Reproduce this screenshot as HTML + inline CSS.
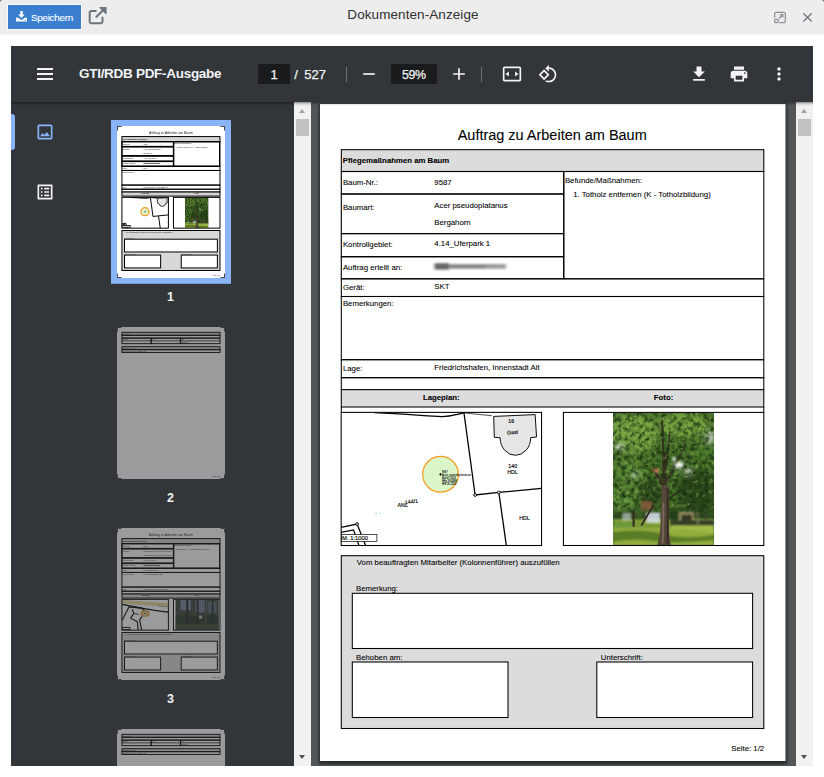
<!DOCTYPE html>
<html lang="de">
<head>
<meta charset="utf-8">
<title>Dokumenten-Anzeige</title>
<style>
html,body{margin:0;padding:0;}
body{width:824px;height:777px;overflow:hidden;background:#fff;position:relative;font-family:"Liberation Sans",sans-serif;}
.abs{position:absolute;}
#cor{left:0;top:0;width:824px;height:4px;background:#6a6a6a;}
#hdr{left:0;top:0;width:824px;height:34px;background:#ededed;border-bottom:1px solid #f3f5f7;border-radius:3px 3px 0 0;}
#save{left:8px;top:5px;width:73px;height:24px;box-shadow:0 0 0 1px rgba(255,252,246,.75);background:#3a7fcf;color:#fff;font-size:9.900px;letter-spacing:-0.27px;-webkit-text-stroke:.1px #fff;}
#save span{position:absolute;left:22.900px;top:7.300px;line-height:12px;white-space:nowrap;}
#ttl{left:347.300px;top:6px;white-space:nowrap;font-size:13.500px;line-height:17px;color:#303030;letter-spacing:0.08px;}
#tb{left:11px;top:46px;width:802px;height:56px;background:#323639;color:#f1f3f4;}
#tb .t{position:absolute;white-space:nowrap;line-height:20px;top:18px;font-size:13.5px;}
#tb .n{font-size:13px;letter-spacing:0;top:18.700px;-webkit-text-stroke:.25px #f1f3f4;}
#tbsh{left:11px;top:102px;width:802px;height:4px;background:linear-gradient(rgba(0,0,0,.42),rgba(0,0,0,.12) 50%,rgba(0,0,0,0));pointer-events:none;}
#side{left:11px;top:102px;width:283px;height:664px;background:#323639;overflow:hidden;}
.sb{width:17px;top:102px;height:664px;background:#f1f1f1;}
.sb i{position:absolute;left:2px;width:13px;top:17px;height:17px;background:#c1c1c1;}
.sb b{position:absolute;left:4.900px;width:0;height:0;border-left:3.700px solid transparent;border-right:3.700px solid transparent;}
.sb b.u{top:6.500px;border-bottom:4.500px solid #a0a0a0;}
.sb b.d{bottom:7px;border-top:4.300px solid #505050;}
#view{left:311px;top:102px;width:485px;height:664px;background:#525659;overflow:hidden;}
.lbl{position:absolute;left:99.5px;width:120px;text-align:center;color:#f1f3f4;font-size:12.5px;font-weight:bold;line-height:14px;}
svg{display:block;}
.pt text{stroke:#000;stroke-width:.08px;}
svg text{font-family:"Liberation Sans",sans-serif;}
</style>
</head>
<body>
<div id="cor" class="abs"></div>
<div id="hdr" class="abs"></div>
<div id="save" class="abs">
<svg class="abs" style="left:8px;top:6px" width="11" height="11" viewBox="0 0 11 11"><path d="M4.3 0h2.4v3.6h2.1L5.5 7 2.2 3.6h2.1z" fill="#fff"/><path d="M0 6.8h2.6l1.9 1.9h2l1.9-1.9H11v3.6H0z" fill="#fff"/><rect x="8.6" y="8.5" width="1" height="1" fill="#3a7fcf"/></svg>
<span>Speichern</span></div>
<svg class="abs" style="left:88px;top:6px" width="20" height="19" viewBox="0 0 20 19"><path d="M14.5 11.5v4.2a1.6 1.6 0 0 1-1.6 1.6H3.3a1.6 1.6 0 0 1-1.6-1.6V6.6A1.6 1.6 0 0 1 3.300 5h4.5" fill="none" stroke="#6c757d" stroke-width="2" stroke-linecap="round"/><path d="M8.5 10.800L17 2.300" fill="none" stroke="#6c757d" stroke-width="2.200" stroke-linecap="round"/><path d="M12 1.500h6v6z" fill="#6c757d" stroke="#6c757d" stroke-width="1.200" stroke-linejoin="round"/></svg>
<div id="ttl" class="abs">Dokumenten-Anzeige</div>
<svg class="abs" style="left:773px;top:11px" width="14" height="13" viewBox="0 0 14 13"><path d="M5.200 1.300H10.800a1.500 1.500 0 0 1 1.500 1.500V10.200a1.500 1.500 0 0 1 -1.500 1.500H6.200M1.700 6.800V2.800a1.500 1.500 0 0 1 1.500-1.500h2" fill="none" stroke="#8b9097" stroke-width="1.200"/><rect x="1.700" y="8.300" width="3.400" height="3.400" rx=".8" fill="none" stroke="#8b9097" stroke-width="1.200"/><path d="M6 7.500L9.800 3.700M6.800 3.700h3v3" fill="none" stroke="#8b9097" stroke-width="1.200"/></svg>
<svg class="abs" style="left:802px;top:12px" width="11" height="11" viewBox="0 0 11 11"><path d="M1.300 1.300l8.500 8.200M9.800 1.300L1.300 9.500" stroke="#6f7782" stroke-width="1.250" fill="none"/></svg>
<div id="tb" class="abs">
<svg class="abs" style="left:22px;top:16px" width="24" height="24" viewBox="0 0 24 24"><path fill="#f1f3f4" d="M4 6h16v2H4zM4 11h16v2H4zM4 16h16v2H4z"/></svg>
<div class="t" style="left:68px;font-weight:bold;letter-spacing:-0.29px;">GTI/RDB PDF-Ausgabe</div>
<div class="abs" style="left:247px;top:18px;width:32px;height:20px;background:#191b1c;"></div>
<div class="t n" style="left:247px;width:32px;text-align:center;">1</div>
<div class="t n" style="left:283.300px;word-spacing:2.800px;">/ 527</div>
<div class="abs" style="left:335px;top:21px;width:1px;height:15px;background:rgba(255,255,255,.3);"></div>
<svg class="abs" style="left:348px;top:18px" width="20" height="20" viewBox="0 0 24 24"><path fill="#f1f3f4" d="M19 13H5v-2h14v2z"/></svg>
<div class="abs" style="left:380px;top:18px;width:46px;height:20px;background:#191b1c;"></div>
<div class="t n" style="left:380px;width:46px;text-align:center;font-size:12.400px;letter-spacing:-.3px;text-indent:-.3px;">59%</div>
<svg class="abs" style="left:438px;top:18px" width="20" height="20" viewBox="0 0 24 24"><path fill="#f1f3f4" d="M19 13h-6v6h-2v-6H5v-2h6V5h2v6h6v2z"/></svg>
<div class="abs" style="left:470px;top:21px;width:1px;height:15px;background:rgba(255,255,255,.3);"></div>
<svg class="abs" style="left:491px;top:18px" width="20" height="20" viewBox="0 0 24 24"><path fill="#f1f3f4" fill-rule="evenodd" d="M21 3H3c-1.100 0-2 .9-2 2v14c0 1.100.9 2 2 2h18c1.100 0 2-.9 2-2V5c0-1.100-.9-2-2-2zm0 16H3V5h18v14zM4.200 12l4.100-3.100v6.200zM19.800 12l-4.100-3.100v6.200z"/></svg>
<svg class="abs" style="left:527px;top:18px" width="20" height="20" viewBox="0 0 24 24"><path fill="#f1f3f4" d="M7.340 6.410L.860 12.900l6.490 6.480 6.490-6.480-6.500-6.490zM3.690 12.900l3.660-3.660L11 12.900l-3.660 3.660-3.650-3.660zm15.670-6.260C17.610 4.880 15.300 4 13 4V.76L8.760 5 13 9.240V6c1.790 0 3.580.68 4.950 2.050 2.730 2.730 2.730 7.170 0 9.900C16.580 19.320 14.790 20 13 20c-.97 0-1.940-.21-2.840-.61l-1.490 1.490C10.020 21.620 11.510 22 13 22c2.300 0 4.610-.88 6.360-2.640 3.520-3.510 3.520-9.210 0-12.720z"/></svg>
<svg class="abs" style="left:678px;top:18px" width="20" height="20" viewBox="0 0 24 24"><path fill="#f1f3f4" d="M19 9h-4V3H9v6H5l7 7 7-7zM5 18v2h14v-2H5z"/></svg>
<svg class="abs" style="left:718px;top:18px" width="20" height="20" viewBox="0 0 24 24"><path fill="#f1f3f4" d="M19 8H5c-1.660 0-3 1.340-3 3v6h4v4h12v-4h4v-6c0-1.660-1.340-3-3-3zm-3 11H8v-5h8v5zm3-7c-.55 0-1-.45-1-1s.45-1 1-1 1 .45 1 1-.45 1-1 1zm-1-9H6v4h12V3z"/></svg>
<svg class="abs" style="left:758px;top:18px" width="20" height="20" viewBox="0 0 24 24"><path fill="#f1f3f4" d="M12 8c1.100 0 2-.9 2-2s-.9-2-2-2-2 .9-2 2 .9 2 2 2zm0 2c-1.100 0-2 .9-2 2s.9 2 2 2 2-.9 2-2-.9-2-2-2zm0 6c-1.100 0-2 .9-2 2s.9 2 2 2 2-.9 2-2-.9-2-2-2z"/></svg>
</div>
<div id="side" class="abs">
<div class="abs" style="left:0;top:12px;width:4px;height:36px;background:#8ab4f8;border-radius:0 3px 3px 0;"></div>
<svg class="abs" style="left:24px;top:20px" width="20" height="20" viewBox="0 0 24 24"><path fill="#8ab4f8" d="M19 5v14H5V5h14m0-2H5c-1.100 0-2 .9-2 2v14c0 1.100.9 2 2 2h14c1.100 0 2-.9 2-2V5c0-1.100-.9-2-2-2zm-4.860 8.860l-3 3.870L9 13.140 6 17h12l-3.860-5.140z"/></svg>
<svg class="abs" style="left:24px;top:80px" width="20" height="20" viewBox="0 0 24 24"><path fill="#f1f3f4" d="M11 7h6v2h-6zm0 4h6v2h-6zm0 4h6v2h-6zM7 7h2v2H7zm0 4h2v2H7zm0 4h2v2H7zM20.100 3H3.900c-.5 0-.9.400-.9.900v16.200c0 .400.400.900.900.900h16.200c.400 0 .900-.500.900-.900V3.900c0-.500-.500-.900-.900-.900zM19 19H5V5h14v14z"/></svg>
<svg class="abs" style="left:0;top:0" width="283" height="664" viewBox="11 102 283 664">
<defs><clipPath id="ph3c"><rect x="9" y="2" width="186" height="129"/></clipPath></defs>
<rect x="111" y="120" width="120" height="163.800" fill="#8ab4f8"/>
<g opacity=".999">
<rect x="117" y="126" width="108" height="152" fill="#fff"/>
<g transform="translate(117 126) scale(0.23201 0.23135) translate(-320 -104)">
<g fill="none" stroke="#000" stroke-width="4.31">
<rect x="341.3" y="149.7" width="422.5" height="21.5" fill="#d4d4d4"/>
<rect x="341.3" y="172.4" width="222" height="20" stroke-width="4.96"/>
<rect x="341.3" y="194.8" width="222" height="37.3" stroke-width="4.96"/>
<rect x="341.3" y="234.5" width="222" height="20.7" stroke-width="4.96"/>
<rect x="341.3" y="257.6" width="222" height="19.8" stroke-width="4.96"/>
<rect x="565" y="173" width="197" height="104"/>
<rect x="341.3" y="171.2" width="422.500" height="107.4"/>
<rect x="341.3" y="278.6" width="422.5" height="17.6"/>
<rect x="341.3" y="296.2" width="422.5" height="63.1"/>
<rect x="341.3" y="359.3" width="422.5" height="18"/>
<rect x="341.3" y="377.3" width="422.5" height="12.1"/>
<rect x="341.3" y="389.4" width="422.5" height="17.6" fill="#d4d4d4"/>
<rect x="341.3" y="555.7" width="422.5" height="172.8" fill="#d8d8d8"/>
<rect x="352.3" y="593.3" width="400.3" height="55.2" fill="#fff"/>
<rect x="352.3" y="662" width="155.7" height="55.5" fill="#fff"/>
<rect x="596.8" y="662" width="155.8" height="55.5" fill="#fff"/>
</g>
<g fill="#222" font-size="7.8">
<text x="552.2" y="140.2" font-size="14.5" text-anchor="middle">Auftrag zu Arbeiten am Baum</text>
<rect x="434" y="264" width="72" height="4.5" fill="#777"/>
<text x="342.7" y="162.6" font-weight="bold">Pflegemaßnahmen am Baum</text>
<text x="342.9" y="185.1">Baum-Nr.:</text>
<text x="434.3" y="185">9587</text>
<text x="342.9" y="209.7">Baumart:</text>
<text x="434.3" y="208.1">Acer pseudoplatanus</text>
<text x="434.3" y="225">Bergahorn</text>
<text x="342.9" y="246.9">Kontrollgebiet:</text>
<text x="434.3" y="246.1">4.14_Uferpark 1</text>
<text x="342.9" y="269.7">Auftrag erteilt an:</text>
<text x="342.9" y="289.9">Gerät:</text>
<text x="434.3" y="289">SKT</text>
<text x="342.9" y="305.7">Bemerkungen:</text>
<text x="342.9" y="371">Lage:</text>
<text x="434.3" y="370">Friedrichshafen, Innenstadt Alt</text>
<text x="565.2" y="183">Befunde/Maßnahmen:</text>
<text x="573.5" y="197.1">1. Totholz entfernen (K - Totholzbildung)</text>
<text x="424" y="399.9" font-weight="bold">Lageplan:</text>
<text x="654" y="399.9" font-weight="bold">Foto:</text>
<text x="356.8" y="565.2">Vom beauftragten Mitarbeiter (Kolonnenführer) auszufüllen</text>
<text x="356" y="590.8">Bemerkung:</text>
<text x="356" y="660">Behoben am:</text>
<text x="600.8" y="660">Unterschrift:</text>
<text x="731.5" y="751">Seite: 1/2</text>
</g><g transform="translate(330 380) scale(0.2791)">
<rect x="40" y="116" width="718" height="477" fill="#fff"/>
<g fill="none" stroke="#000" stroke-width="15" clip-path="url(#mapclip)">
<path d="M160 117C250 121 330 127 400 131C430 131 455 123 480 118L580 126"/>
<path d="M480 118L520 412L605 403L757 388M605 403L632 594"/>
<path d="M585 130L735 122L740 202L718 206A55 58 0 0 1 610 212L590 206Z" fill="#e4e4e4" stroke-width="12"/>
<circle cx="396" cy="338" r="62" fill="#dbf6c9" stroke="#f59a1c" stroke-width="20"/>
<path d="M30 530L97 516L128 594M30 548L84 537L104 594"/>
<rect x="40" y="553" width="128" height="25" fill="#fff" stroke-width="12"/>
<path d="M380 338h34" stroke-width="10" stroke="#333"/>
</g>
<rect x="40" y="116" width="718" height="477" fill="none" stroke="#000" stroke-width="15.5"/>
</g><g transform="translate(613.1 413)">
<g clip-path="url(#phc)">
<rect x="0" y="0" width="101" height="132.300" fill="#3c5e22"/>
<rect x="0" y="92" width="101" height="20" fill="#2c4420"/>
<g filter="url(#b2)">
<rect x="0" y="106" width="101" height="27" fill="#90ad3c"/>
<path d="M0 107h34l10 4h57v4H0z" fill="#7a9a34"/>
<path d="M58 112h43v8Q80 116 58 116z" fill="#a2ba4a"/>
<path d="M0 119Q30 115 50 121T101 122V127Q60 131 40 128T0 129Z" fill="#5a7c26"/>
<path d="M0 110h22v4H0z" fill="#6c983a"/>
</g>
<g mask="url(#lm)">
<g filter="url(#leaf)">
<rect x="0" y="0" width="101" height="112" fill="#47702a"/>
<g filter="url(#b1)">
<ellipse cx="20" cy="20" rx="26" ry="20" fill="#78a642"/>
<ellipse cx="70" cy="12" rx="26" ry="13" fill="#76a440"/>
<ellipse cx="18" cy="58" rx="18" ry="12" fill="#5c8c34"/>
<ellipse cx="10" cy="86" rx="14" ry="13" fill="#5c8e38"/>
<ellipse cx="84" cy="80" rx="20" ry="24" fill="#2c4c1b"/>
<ellipse cx="38" cy="80" rx="11" ry="14" fill="#2e4e1e"/>
<ellipse cx="90" cy="40" rx="12" ry="16" fill="#4c7c2c"/>
<ellipse cx="66" cy="52" rx="4.500" ry="2.800" fill="#f4f6f4"/>
<ellipse cx="75" cy="58" rx="3" ry="1.600" fill="#e6ece8"/>
<ellipse cx="97" cy="24" rx="3" ry="6" fill="#d2dacc"/>
<ellipse cx="6" cy="34" rx="3.500" ry="2.500" fill="#ccd6c4"/>
<ellipse cx="22" cy="62" rx="2" ry="1.500" fill="#dde4d8"/>
</g>
<g fill="none" stroke-linecap="round" filter="url(#b3)">
<path d="M50.500 58C50.500 40 50 25 49 8" stroke="#3a3024" stroke-width="2"/><path d="M51.500 92C52 78 51.500 70 51.500 42" stroke="#3a3024" stroke-width="4.200"/>
<path d="M50.500 74C47 68 44 62 41 56" stroke="#3e3226" stroke-width="2.800"/>
<path d="M53 70C58 60 66 45 72.500 31" stroke="#43382e" stroke-width="1.500"/>
<path d="M52 60C54 45 56 35 56.500 20" stroke="#3c3328" stroke-width="1.500"/>
<path d="M55 86L68 77" stroke="#2e281e" stroke-width="1.500"/>
<ellipse cx="42" cy="57" rx="3" ry="2.500" fill="#a8704c" stroke="none"/>
</g>
</g>
</g>
<g filter="url(#b2)">
<ellipse cx="66" cy="52" rx="4" ry="2.500" fill="#f4f6f4"/>
<ellipse cx="61" cy="46" rx="1.500" ry="2.500" fill="#e4eae6"/>
<ellipse cx="75" cy="58" rx="3" ry="1.300" fill="#dfe6e2" opacity=".8"/>
<ellipse cx="98" cy="24" rx="2" ry="5" fill="#d2dacc" opacity=".7"/>
<ellipse cx="5" cy="34" rx="3" ry="2" fill="#ccd6c4" opacity=".7"/>
<ellipse cx="21" cy="62" rx="2" ry="1.500" fill="#dde4d8" opacity=".7"/>
<ellipse cx="44" cy="58" rx="2.500" ry="2" fill="#b07850"/>
</g>
<g filter="url(#b2)" opacity=".9">
<rect x="28" y="88" width="11" height="9" fill="#9a5a40" opacity=".8"/>
<rect x="33" y="99.500" width="14" height="10.500" fill="#d4dbe6"/>
<rect x="9" y="100" width="9" height="8" fill="#b9c2c0" opacity=".8"/>
<rect x="66" y="99" width="15" height="10" fill="#a89a6c"/>
<rect x="68" y="101.500" width="11" height="7.500" fill="#34362a"/>
<rect x="57" y="107" width="44" height="5" fill="#2a3326"/>
<rect x="84" y="99" width="1.500" height="12" fill="#7a7868"/>
<rect x="92" y="101" width="1.500" height="11" fill="#3c3a2e"/>
<ellipse cx="61" cy="103" rx="5" ry="6" fill="#24401a"/>
<ellipse cx="26" cy="101" rx="4" ry="5" fill="#3a6026"/>
</g>
<g filter="url(#b3)" fill="none" stroke-linecap="round">
<path d="M20.500 99V113" stroke="#36331f" stroke-width="2.200"/>
<path d="M28.500 112L40 93" stroke="#322c20" stroke-width="1.800"/>
<path d="M44 132.500C47 124 47.500 112 48 100C48.300 92 48 84 48.500 72L55.500 72C55.800 84 56.200 92 56 100C55.800 112 55.500 124 58 132.500Z" fill="#56463a" stroke="none"/>
<path d="M49.500 130C50.300 118 50.300 104 50.300 90" stroke="#78685a" stroke-width="1.800"/>
<path d="M54.500 130C54.500 118 54.800 104 54.500 76" stroke="#362c22" stroke-width="1.800"/>
</g>
</g>
<rect x="0" y="0" width="101" height="108" fill="#1c3410" opacity=".38"/>
<rect x="-49.700" y="-.6" width="200.400" height="133.100" fill="none" stroke="#000" stroke-width="4.3"/>
</g>
</g>
<path d="M121.5 126.5H117M117.5 126V130.5M220.5 126.5H225M224.5 126V130.5M121.5 277.5H117M117.5 278V273.5M220.5 277.5H225M224.5 278V273.5" fill="none" stroke="#4a4a4a" stroke-width="1"/>
</g>
<g opacity=".5">
<rect x="117" y="327" width="108" height="152" fill="#fff"/>
<g transform="translate(117 327) scale(0.23201 0.23135) translate(-320 -104)">
<g fill="none" stroke="#000" stroke-width="4.31">
<rect x="341.3" y="127" width="422.5" height="13" fill="#d4d4d4"/>
<rect x="341.3" y="140" width="422.5" height="12"/>
<rect x="341.3" y="152" width="126" height="24"/>
<rect x="467.3" y="152" width="126" height="24"/>
<rect x="593.3" y="152" width="170.5" height="24"/>
<path d="M341.3 164H763.8" stroke-width="3.2"/>
<rect x="341.3" y="189" width="422.5" height="13" fill="#d4d4d4"/>
<rect x="341.3" y="202" width="422.5" height="12"/>
</g>
<g fill="#222" font-size="7.8">
<text x="343" y="137">Ausführung</text>
<text x="343" y="161">Datum:</text>
<text x="469" y="161">Von:</text>
<text x="595" y="161">Bis:</text>
<text x="595" y="173">Stunden:</text>
<text x="343" y="199">Material / Geräte</text>
<text x="343" y="211">Bemerkungen zur Ausführung</text>
<text x="731.5" y="751">Seite: 2/2</text>
</g>
</g>
<path d="M121.5 327.5H117M117.5 327V331.5M220.5 327.5H225M224.5 327V331.5M121.5 478.5H117M117.5 479V474.5M220.5 478.5H225M224.5 479V474.5" fill="none" stroke="#4a4a4a" stroke-width="1"/>
</g>
<g opacity=".5">
<rect x="117" y="528" width="108" height="152" fill="#fff"/>
<g transform="translate(117 528) scale(0.23201 0.23135) translate(-320 -104)">
<g fill="none" stroke="#000" stroke-width="4.31">
<rect x="341.3" y="149.7" width="422.5" height="21.5" fill="#d4d4d4"/>
<rect x="341.3" y="172.4" width="222" height="20" stroke-width="4.96"/>
<rect x="341.3" y="194.8" width="222" height="37.3" stroke-width="4.96"/>
<rect x="341.3" y="234.5" width="222" height="20.7" stroke-width="4.96"/>
<rect x="341.3" y="257.6" width="222" height="19.8" stroke-width="4.96"/>
<rect x="565" y="173" width="197" height="104"/>
<rect x="341.3" y="171.2" width="422.500" height="107.4"/>
<rect x="341.3" y="278.6" width="422.5" height="17.6"/>
<rect x="341.3" y="296.2" width="422.5" height="63.1"/>
<rect x="341.3" y="359.3" width="422.5" height="18"/>
<rect x="341.3" y="377.3" width="422.5" height="12.1"/>
<rect x="341.3" y="389.4" width="422.5" height="17.6" fill="#d4d4d4"/>
<rect x="341.3" y="555.7" width="422.5" height="172.8" fill="#d8d8d8"/>
<rect x="352.3" y="593.3" width="400.3" height="55.2" fill="#fff"/>
<rect x="352.3" y="662" width="155.7" height="55.5" fill="#fff"/>
<rect x="596.8" y="662" width="155.8" height="55.5" fill="#fff"/>
</g>
<g fill="#222" font-size="7.8">
<text x="552.2" y="140.2" font-size="14.5" text-anchor="middle">Auftrag zu Arbeiten am Baum</text>
<rect x="434" y="264" width="72" height="4.5" fill="#777"/>
<text x="342.7" y="162.6" font-weight="bold">Pflegemaßnahmen am Baum</text>
<text x="342.9" y="185.1">Baum-Nr.:</text>
<text x="434.3" y="185">10286</text>
<text x="342.9" y="209.7">Baumart:</text>
<text x="434.3" y="208.1">Baumgruppe bis 10 St. Laubbäume</text>
<text x="434.3" y="225">Baumgruppe bis 10 St. Laubbäume</text>
<text x="342.9" y="246.9">Kontrollgebiet:</text>
<text x="434.3" y="246.1">4.14_Uferpark 1</text>
<text x="342.9" y="269.7">Auftrag erteilt an:</text>
<text x="342.9" y="289.9">Gerät:</text>
<text x="434.3" y="289">Hub-Steiger, SKT</text>
<text x="342.9" y="305.7">Bemerkungen:</text>
<text x="342.9" y="371">Lage:</text>
<text x="434.3" y="370">Friedrichshafen, Innenstadt Alt</text>
<text x="565.2" y="183">Befunde/Maßnahmen:</text>
<text x="573.5" y="197.1">1. Entfernen (K - Absterbender Baum/Ast)</text>
<text x="424" y="399.9" font-weight="bold">Lageplan:</text>
<text x="654" y="399.9" font-weight="bold">Foto:</text>
<text x="356.8" y="565.2">Vom beauftragten Mitarbeiter (Kolonnenführer) auszufüllen</text>
<text x="356" y="590.8">Bemerkung:</text>
<text x="356" y="660">Behoben am:</text>
<text x="600.8" y="660">Unterschrift:</text>
<text x="731.5" y="751">Seite: 1/2</text>
<text x="434.3" y="305.7">ca. 2-3 Stk/Bäume/Jahr</text>
</g><g transform="translate(330 380) scale(0.2791)">
<rect x="40" y="116" width="718" height="477" fill="#fff"/>
<g fill="none" stroke="#000" stroke-width="17" clip-path="url(#mapclip)" stroke-linejoin="round">
<path d="M40 126L758 172L758 236L40 182Z" fill="#e6d99a" stroke="none"/>
<path d="M40 193C200 222 320 250 405 265C520 285 640 300 758 316" stroke-width="20"/>
<path d="M600 220L758 232" stroke="#9a9270" stroke-width="12"/>
<path d="M520 262L758 290" stroke="#fff" stroke-width="16"/>
<path d="M45 440L150 232L345 252L400 312M199 269L222 334L176 407L279 464L291 590M345 590L313 430L355 379"/>
<path d="M222 334L300 350" stroke-width="12"/>
<ellipse cx="398" cy="336" rx="62" ry="42" fill="#d9cf9c" stroke="#e8901a" stroke-width="18"/>
<path d="M375 336h46" stroke="#555" stroke-width="14"/>
<rect x="46" y="551" width="118" height="34" fill="#fff" stroke-width="14"/>
</g>
<rect x="40" y="116" width="718" height="477" fill="none" stroke="#000" stroke-width="15.5"/>
</g><g transform="translate(563.4 412.4)">
<rect x="0" y="0" width="200.400" height="133.100" fill="#fff"/>
<rect x="9" y="2" width="186" height="129" fill="#3a4636"/>
<g filter="url(#b1)" clip-path="url(#ph3c)">
<rect x="30" y="2" width="45" height="45" fill="#76849a"/>
<rect x="95" y="2" width="50" height="55" fill="#6c7a8c"/>
<rect x="150" y="10" width="36" height="50" fill="#5c6a74"/>
<rect x="9" y="70" width="186" height="60" fill="#2c3626"/>
<rect x="55" y="0" width="9" height="130" fill="#262822"/>
<rect x="100" y="0" width="8" height="130" fill="#2c2c28"/>
<rect x="135" y="0" width="7" height="130" fill="#4a4238"/>
<rect x="165" y="0" width="7" height="130" fill="#282a24"/>
<rect x="9" y="105" width="186" height="26" fill="#3e4c30"/>
<rect x="110" y="70" width="14" height="14" fill="#a8b0b4"/>
</g>
<rect x="0" y="0" width="200.400" height="133.100" fill="none" stroke="#000" stroke-width="4.3"/>
</g>
</g>
<path d="M121.5 528.5H117M117.5 528V532.5M220.5 528.5H225M224.5 528V532.5M121.5 679.5H117M117.5 680V675.5M220.5 679.5H225M224.5 680V675.5" fill="none" stroke="#4a4a4a" stroke-width="1"/>
</g>
<g opacity=".5">
<rect x="117" y="729" width="108" height="152" fill="#fff"/>
<g transform="translate(117 729) scale(0.23201 0.23135) translate(-320 -104)">
<g fill="none" stroke="#000" stroke-width="4.31">
<rect x="341.3" y="127" width="422.5" height="13" fill="#d4d4d4"/>
<rect x="341.3" y="140" width="422.5" height="12"/>
<rect x="341.3" y="152" width="126" height="24"/>
<rect x="467.3" y="152" width="126" height="24"/>
<rect x="593.3" y="152" width="170.5" height="24"/>
<path d="M341.3 164H763.8" stroke-width="3.2"/>
<rect x="341.3" y="189" width="422.5" height="13" fill="#d4d4d4"/>
<rect x="341.3" y="202" width="422.5" height="12"/>
</g>
<g fill="#222" font-size="7.8">
<text x="343" y="137">Ausführung</text>
<text x="343" y="161">Datum:</text>
<text x="469" y="161">Von:</text>
<text x="595" y="161">Bis:</text>
<text x="595" y="173">Stunden:</text>
<text x="343" y="199">Material / Geräte</text>
<text x="343" y="211">Bemerkungen zur Ausführung</text>
<text x="731.5" y="751">Seite: 2/2</text>
</g>
</g>
<path d="M121.5 729.5H117M117.5 729V733.5M220.5 729.5H225M224.5 729V733.5M121.5 880.5H117M117.5 881V876.5M220.5 880.5H225M224.5 881V876.5" fill="none" stroke="#4a4a4a" stroke-width="1"/>
</g>
</svg>
<div class="lbl" style="top:187.7px">1</div>
<div class="lbl" style="top:388.7px">2</div>
<div class="lbl" style="top:589.7px">3</div>

</div>
<div class="abs sb" style="left:294px;"><b class="u"></b><i></i><b class="d"></b></div>
<div class="abs sb" style="left:796px;"><b class="u"></b><i></i><b class="d"></b></div>

<div id="view" class="abs">
<svg width="485" height="664" viewBox="311 102 485 664">
<defs>
<filter id="blurname" x="-10%" y="-50%" width="120%" height="200%"><feGaussianBlur stdDeviation="1.800 0.800"/></filter>
<filter id="pshadow" x="-5%" y="-5%" width="110%" height="110%"><feGaussianBlur stdDeviation="1.500"/></filter>
</defs>
<rect x="319" y="104" width="468" height="660" fill="#000" opacity=".55" filter="url(#pshadow)"/>
<rect x="320" y="104" width="465.5" height="657" fill="#fff"/>
<g fill="#000" font-size="7.800" class="pt">
<text x="552.200" y="140.200" font-size="14.480" text-anchor="middle">Auftrag zu Arbeiten am Baum</text>
<g fill="none" stroke="#000" stroke-width="1.050">
<rect x="341.300" y="149.700" width="422.500" height="21.800" fill="#dcdcdc"/>
<rect x="341.300" y="171.500" width="222.400" height="22.500" stroke-width="1.120"/>
<rect x="341.300" y="194" width="222.400" height="39.600" stroke-width="1.120"/>
<rect x="341.300" y="233.600" width="222.400" height="23.100" stroke-width="1.120"/>
<rect x="341.300" y="256.700" width="222.400" height="22.100" stroke-width="1.120"/>
<rect x="563.800" y="171.500" width="200" height="107.300"/>
<rect x="341.300" y="278.800" width="422.500" height="17.700"/>
<rect x="341.300" y="296.500" width="422.500" height="63.200"/>
<rect x="341.300" y="359.700" width="422.500" height="18"/>
<rect x="341.300" y="377.700" width="422.500" height="12"/>
<rect x="341.300" y="389.700" width="422.500" height="17.300" fill="#dcdcdc"/>
<path d="M341.300 407V412.400M763.800 407V412.400"/>
</g>
<text x="342.700" y="162.600" font-weight="bold">Pflegemaßnahmen am Baum</text>
<text x="342.900" y="185.100">Baum-Nr.:</text>
<text x="434.300" y="185">9587</text>
<text x="342.900" y="209.700">Baumart:</text>
<text x="434.300" y="208.100">Acer pseudoplatanus</text>
<text x="434.300" y="225">Bergahorn</text>
<text x="342.900" y="246.900">Kontrollgebiet:</text>
<text x="434.300" y="246.100">4.14_Uferpark 1</text>
<text x="342.900" y="269.700">Auftrag erteilt an:</text>
<g filter="url(#blurname)" stroke="none"><rect x="434" y="264" width="72" height="4.800" fill="#9c9c9c"/><rect x="435" y="263.200" width="14" height="6.400" fill="#666"/><rect x="450" y="264.800" width="36" height="3.400" fill="#868686"/></g>
<text x="342.900" y="289.900">Gerät:</text>
<text x="434.300" y="289">SKT</text>
<text x="342.900" y="305.700">Bemerkungen:</text>
<text x="342.900" y="371">Lage:</text>
<text x="434.300" y="370">Friedrichshafen, Innenstadt Alt</text>
<text x="564.900" y="183">Befunde/Maßnahmen:</text>
<text x="573.200" y="197.100">1. Totholz entfernen (K - Totholzbildung)</text>
<text x="441.300" y="399.900" font-weight="bold" text-anchor="middle">Lageplan:</text>
<text x="663.600" y="399.900" font-weight="bold" text-anchor="middle">Foto:</text>
</g>
<g transform="translate(330 380) scale(0.27910)">
<clipPath id="mapclip"><rect x="40" y="116" width="718" height="477"/></clipPath>
<rect x="40" y="116" width="718" height="477" fill="#fff"/>
<g clip-path="url(#mapclip)" fill="none" stroke="#000" stroke-width="4.600">
<path d="M160 117C250 121 330 127 400 131C430 131 455 123 480 118"/>
<path d="M480 118L580 128" stroke-width="2.500"/>
<path d="M480 118L520 412L605 403L757 388"/>
<path d="M605 403L632 594"/>
<path d="M586.500 130.500L735 124L740 204L719 206.600A54.700 63 0 0 1 609.600 207L588.700 205.300Z" fill="#e6e6e6" stroke-width="3.400"/>
<circle cx="396" cy="338" r="64" fill="#dbf6c9" stroke="#f79a1e" stroke-width="4.500"/>
<path d="M30 530L97 516L128 594M30 548L84 537L104 594" stroke-width="4.500"/>
<circle cx="520" cy="412" r="5" fill="#fff" stroke-width="3.400"/>
<circle cx="605" cy="403" r="5" fill="#fff" stroke-width="3.400"/>
<circle cx="97" cy="516" r="5" fill="#fff" stroke-width="3.400"/>
<path d="M391 338h10M396 333v10" stroke-width="3"/>
<path d="M162 478h6M177 478h6" stroke="#7be07b" stroke-width="2.500"/>
<rect x="40" y="553" width="128" height="25" fill="#fff" stroke-width="2.500"/>
</g>
<g fill="#000" font-size="19" stroke="#000" stroke-width=".5">
<text x="639" y="154">16</text>
<text x="634" y="194" transform="rotate(-7 655 188)">Gast</text>
<text x="639" y="314">140</text>
<text x="635" y="337">HDL</text>
<text x="268" y="442" transform="rotate(-7 292 436)">144/1</text>
<text x="242" y="456">ANL</text>
<text x="678" y="501">HDL</text>
<text x="43" y="573" font-size="21">M. 1:1000</text>
<g font-size="9.500" stroke-width=".25">
<text x="401" y="332">9587</text>
<text x="401" y="343" textLength="104">Acer pseudoplatanus</text>
<text x="401" y="354">Bgl-Vt 2020</text>
<text x="401" y="365">Reg 18-0080</text>
<text x="401" y="376">HG 28-2020</text>
</g>
</g>
<rect x="40" y="116" width="718" height="477" fill="none" stroke="#000" stroke-width="3.800"/>
</g>

<g transform="translate(613.1 413)">
<defs>
<filter id="leaf" x="0" y="0" width="100%" height="100%" color-interpolation-filters="sRGB">
<feTurbulence type="fractalNoise" baseFrequency="0.23 0.21" numOctaves="3" seed="11" result="n"/>
<feColorMatrix in="n" type="matrix" values="0 0 0 0 0  0 0 0 0 0  0 0 0 0 0  2.200 0 0 0 -0.850" result="a"/>
<feFlood flood-color="#1a3010" result="d"/>
<feComposite in="d" in2="a" operator="in" result="dark"/>
<feColorMatrix in="n" type="matrix" values="0 0 0 0 0  0 0 0 0 0  0 0 0 0 0  0 -2.200 0 0 0.880" result="b"/>
<feFlood flood-color="#9cbc58" result="l"/>
<feComposite in="l" in2="b" operator="in" result="light"/>
<feMerge><feMergeNode in="SourceGraphic"/><feMergeNode in="dark"/><feMergeNode in="light"/></feMerge>
<feGaussianBlur stdDeviation=".75"/>
</filter>
<filter id="b1" x="-30%" y="-30%" width="160%" height="160%"><feGaussianBlur stdDeviation="3"/></filter>
<filter id="b2" x="-30%" y="-30%" width="160%" height="160%"><feGaussianBlur stdDeviation="1"/></filter>
<filter id="b3" x="-30%" y="-30%" width="160%" height="160%"><feGaussianBlur stdDeviation=".45"/></filter>
<clipPath id="phc"><rect x="0" y="0" width="101" height="132.300"/></clipPath>
<linearGradient id="fade" x1="0" y1="0" x2="0" y2="1"><stop offset="0" stop-color="#fff"/><stop offset=".70" stop-color="#fff"/><stop offset=".79" stop-color="#000"/></linearGradient>
<mask id="lm" maskUnits="userSpaceOnUse" x="0" y="0" width="101" height="133"><rect x="0" y="0" width="101" height="133" fill="url(#fade)"/></mask>
</defs>
<g clip-path="url(#phc)">
<rect x="0" y="0" width="101" height="132.300" fill="#3c5e22"/>
<rect x="0" y="92" width="101" height="20" fill="#2c4420"/>
<g filter="url(#b2)">
<rect x="0" y="106" width="101" height="27" fill="#90ad3c"/>
<path d="M0 107h34l10 4h57v4H0z" fill="#7a9a34"/>
<path d="M58 112h43v8Q80 116 58 116z" fill="#a2ba4a"/>
<path d="M0 119Q30 115 50 121T101 122V127Q60 131 40 128T0 129Z" fill="#5a7c26"/>
<path d="M0 110h22v4H0z" fill="#6c983a"/>
</g>
<g mask="url(#lm)">
<g filter="url(#leaf)">
<rect x="0" y="0" width="101" height="112" fill="#47702a"/>
<g filter="url(#b1)">
<ellipse cx="20" cy="20" rx="26" ry="20" fill="#78a642"/>
<ellipse cx="70" cy="12" rx="26" ry="13" fill="#76a440"/>
<ellipse cx="18" cy="58" rx="18" ry="12" fill="#5c8c34"/>
<ellipse cx="10" cy="86" rx="14" ry="13" fill="#5c8e38"/>
<ellipse cx="84" cy="80" rx="20" ry="24" fill="#2c4c1b"/>
<ellipse cx="38" cy="80" rx="11" ry="14" fill="#2e4e1e"/>
<ellipse cx="90" cy="40" rx="12" ry="16" fill="#4c7c2c"/>
<ellipse cx="66" cy="52" rx="4.500" ry="2.800" fill="#f4f6f4"/>
<ellipse cx="75" cy="58" rx="3" ry="1.600" fill="#e6ece8"/>
<ellipse cx="97" cy="24" rx="3" ry="6" fill="#d2dacc"/>
<ellipse cx="6" cy="34" rx="3.500" ry="2.500" fill="#ccd6c4"/>
<ellipse cx="22" cy="62" rx="2" ry="1.500" fill="#dde4d8"/>
</g>
<g fill="none" stroke-linecap="round" filter="url(#b3)">
<path d="M50.500 58C50.500 40 50 25 49 8" stroke="#3a3024" stroke-width="2"/><path d="M51.500 92C52 78 51.500 70 51.500 42" stroke="#3a3024" stroke-width="4.200"/>
<path d="M50.500 74C47 68 44 62 41 56" stroke="#3e3226" stroke-width="2.800"/>
<path d="M53 70C58 60 66 45 72.500 31" stroke="#43382e" stroke-width="1.500"/>
<path d="M52 60C54 45 56 35 56.500 20" stroke="#3c3328" stroke-width="1.500"/>
<path d="M55 86L68 77" stroke="#2e281e" stroke-width="1.500"/>
<ellipse cx="42" cy="57" rx="3" ry="2.500" fill="#a8704c" stroke="none"/>
</g>
</g>
</g>
<g filter="url(#b2)">
<ellipse cx="66" cy="52" rx="4" ry="2.500" fill="#f4f6f4"/>
<ellipse cx="61" cy="46" rx="1.500" ry="2.500" fill="#e4eae6"/>
<ellipse cx="75" cy="58" rx="3" ry="1.300" fill="#dfe6e2" opacity=".8"/>
<ellipse cx="98" cy="24" rx="2" ry="5" fill="#d2dacc" opacity=".7"/>
<ellipse cx="5" cy="34" rx="3" ry="2" fill="#ccd6c4" opacity=".7"/>
<ellipse cx="21" cy="62" rx="2" ry="1.500" fill="#dde4d8" opacity=".7"/>
<ellipse cx="44" cy="58" rx="2.500" ry="2" fill="#b07850"/>
</g>
<g filter="url(#b2)" opacity=".9">
<rect x="28" y="88" width="11" height="9" fill="#9a5a40" opacity=".8"/>
<rect x="33" y="99.500" width="14" height="10.500" fill="#d4dbe6"/>
<rect x="9" y="100" width="9" height="8" fill="#b9c2c0" opacity=".8"/>
<rect x="66" y="99" width="15" height="10" fill="#a89a6c"/>
<rect x="68" y="101.500" width="11" height="7.500" fill="#34362a"/>
<rect x="57" y="107" width="44" height="5" fill="#2a3326"/>
<rect x="84" y="99" width="1.500" height="12" fill="#7a7868"/>
<rect x="92" y="101" width="1.500" height="11" fill="#3c3a2e"/>
<ellipse cx="61" cy="103" rx="5" ry="6" fill="#24401a"/>
<ellipse cx="26" cy="101" rx="4" ry="5" fill="#3a6026"/>
</g>
<g filter="url(#b3)" fill="none" stroke-linecap="round">
<path d="M20.500 99V113" stroke="#36331f" stroke-width="2.200"/>
<path d="M28.500 112L40 93" stroke="#322c20" stroke-width="1.800"/>
<path d="M44 132.500C47 124 47.500 112 48 100C48.300 92 48 84 48.500 72L55.500 72C55.800 84 56.200 92 56 100C55.800 112 55.500 124 58 132.500Z" fill="#56463a" stroke="none"/>
<path d="M49.500 130C50.300 118 50.300 104 50.300 90" stroke="#78685a" stroke-width="1.800"/>
<path d="M54.500 130C54.500 118 54.800 104 54.500 76" stroke="#362c22" stroke-width="1.800"/>
</g>
</g>
<rect x="-49.700" y="-.6" width="200.400" height="133.100" fill="none" stroke="#000" stroke-width="1.050"/>
</g>

<g font-size="7.800" fill="#000" class="pt">
<rect x="341.300" y="555.700" width="422.500" height="172.800" fill="#dcdcdc" stroke="#000" stroke-width="1.050"/>
<rect x="352.300" y="593.300" width="400.300" height="55.200" fill="#fff" stroke="#000" stroke-width="1.050"/>
<rect x="352.300" y="662" width="155.700" height="55.500" fill="#fff" stroke="#000" stroke-width="1.050"/>
<rect x="596.800" y="662" width="155.800" height="55.500" fill="#fff" stroke="#000" stroke-width="1.050"/>
<text x="356.800" y="565.200">Vom beauftragten Mitarbeiter (Kolonnenführer) auszufüllen</text>
<text x="356" y="590.800">Bemerkung:</text>
<text x="356" y="660">Behoben am:</text>
<text x="600.800" y="660">Unterschrift:</text>
<text x="764.200" y="751" text-anchor="end">Seite: 1/2</text>
</g>
</svg>
</div>
<div id="tbsh" class="abs"></div>
</body>
</html>
